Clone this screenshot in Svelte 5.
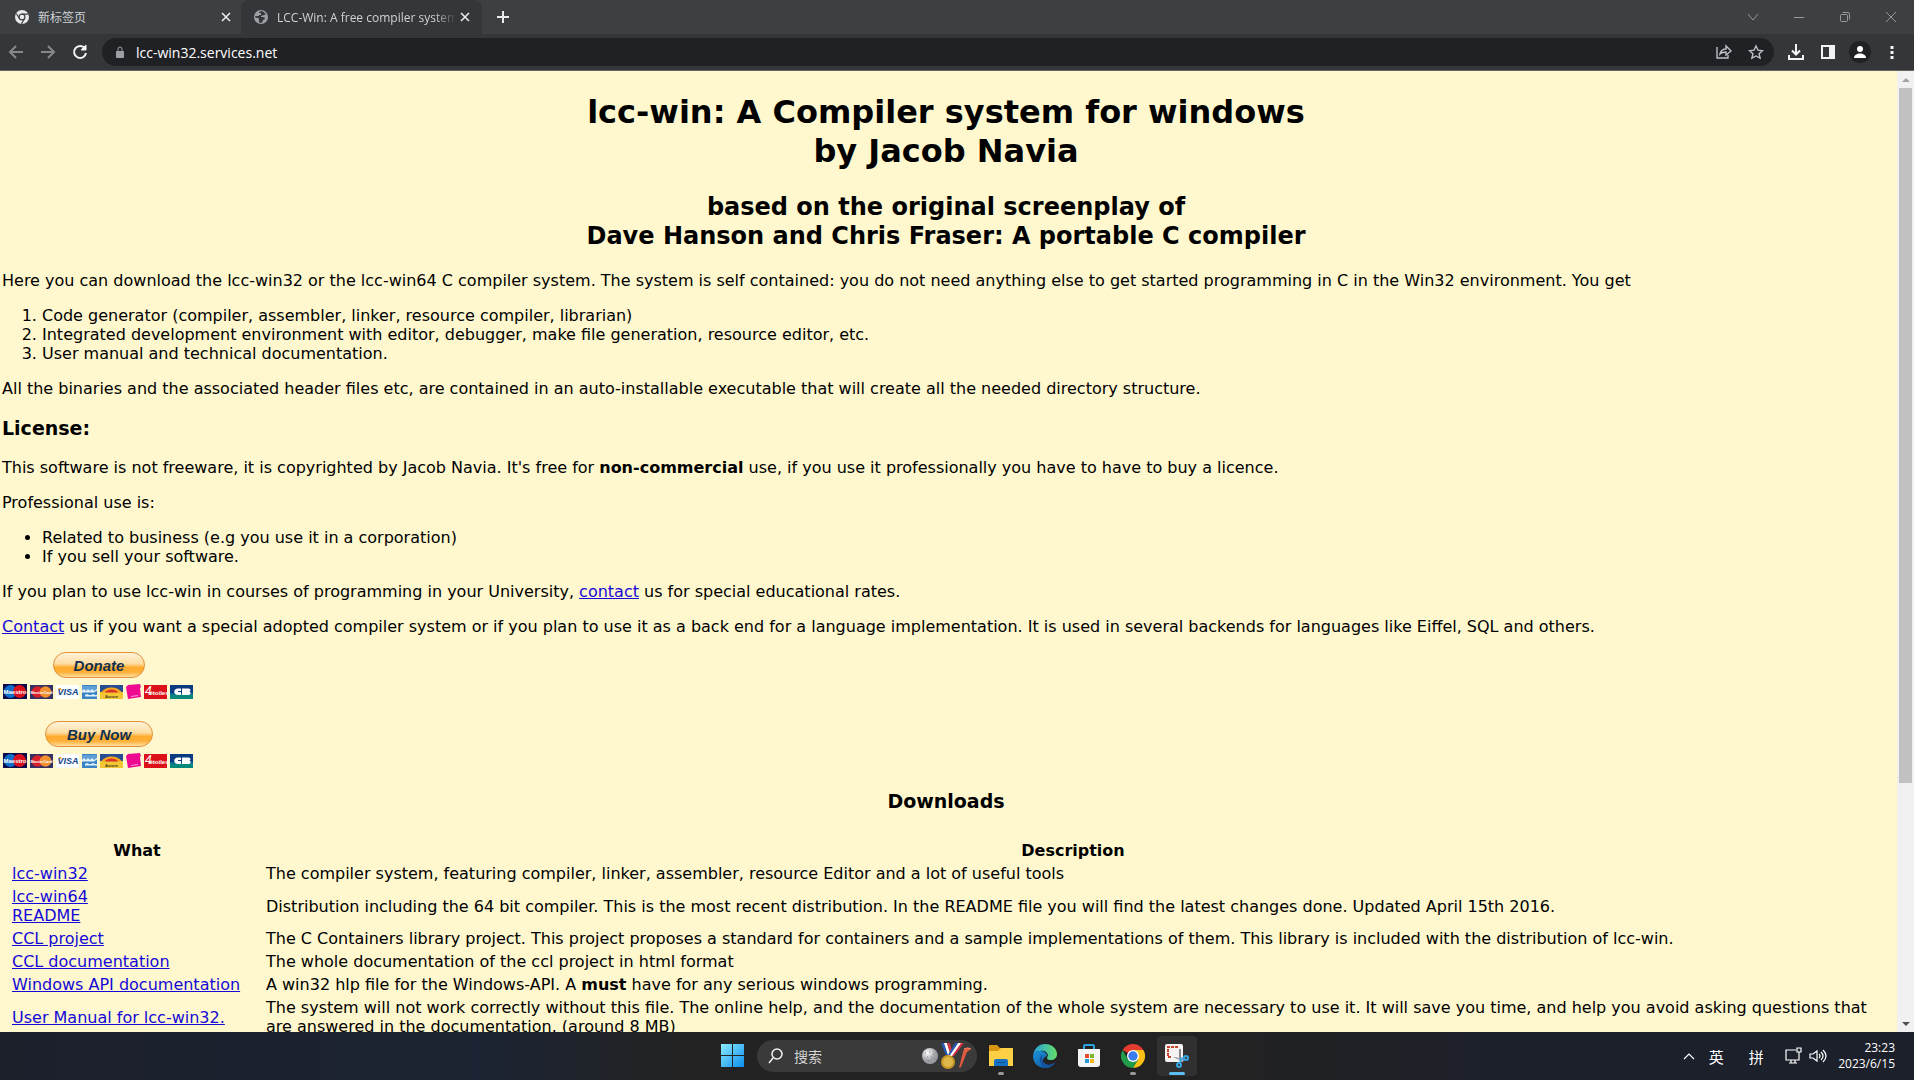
<script lang="ts">
  const downloads = [
    { links: ['lcc-win32'], text: ['The compiler system, featuring compiler, linker, assembler, resource Editor and a lot of useful tools'] },
    { links: ['lcc-win64', 'README'], text: ['Distribution including the 64 bit compiler. This is the most recent distribution. In the README file you will find the latest changes done. Updated April 15th 2016.'] },
    { links: ['CCL project'], text: ['The C Containers library project. This project proposes a standard for containers and a sample implementations of them. This library is included with the distribution of lcc-win.'] },
    { links: ['CCL documentation'], text: ['The whole documentation of the ccl project in html format'] },
    { links: ['Windows API documentation'], text: ['A win32 hlp file for the Windows-API. A ', 'must', ' have for any serious windows programming.'] },
    { links: ['User Manual for lcc-win32.'], text: ['The system will not work correctly without this file. The online help, and the documentation of the whole system are necessary to use it. It will save you time, and help you avoid asking questions that are answered in the documentation. (around 8 MB)'] },
  ];

  let address = $state('lcc-win32.services.net');
</script>

{#snippet cards()}
  <svg class="cards" width="194" height="16" viewBox="0 0 194 16" aria-label="Accepted cards">
    <rect x="1" y="1" width="24" height="15" fill="#0b0b4c" />
    <circle cx="8.500" cy="8.500" r="6.500" fill="#0f6fc8" />
    <circle cx="17.500" cy="8.500" r="6.500" fill="#d9101c" />
    <text x="13" y="10.500" class="card-name" fill="#fff">Maestro</text>
    <rect x="28" y="2" width="23" height="14" fill="#353063" />
    <circle cx="35.500" cy="9" r="5.800" fill="#d8202a" />
    <circle cx="43.500" cy="9" r="5.800" fill="#f2902f" />
    <text x="39.500" y="11" class="card-name small" fill="#fff">MasterCard</text>
    <rect x="54" y="2" width="23" height="14" fill="#fff" />
    <text x="66" y="12" class="visa">VISA</text>
    <path d="M56 5h3l1 3z" fill="#f3a325" />
    <rect x="80" y="2" width="15" height="14" fill="#3a83c4" />
    <path d="M80 3h15v5H80z" fill="#5d9fd6" />
    <path d="M80 8l2-2 2 2 2-2 2 2 2-2 2 2 3-2v1.500l-3 2H80zM83 12l2-1 2 1h2l2-1 2 1h2v1.500H83z" fill="#e3f1fa" />
    <rect x="98" y="2" width="23" height="14" fill="#f3c634" />
    <path d="M98 2h23v7H98z" fill="#284c91" />
    <path d="M99 9.500c3-4 7-5 10.500-5S117 5.500 120 9.500z" fill="#f6a51e" />
    <path d="M103 9.500c2-4 11-4 13 0z" fill="#d8342b" />
    <text x="109.500" y="14.500" class="card-name small" fill="#453c22">Aurore</text>
    <path d="M124 4l2-2 12-1 1 3-1 1 1 9-13 2z" fill="#ee0a91" />
    <path d="M129 13.500l7-1" stroke="#f79bd0" />
    <rect x="142" y="2" width="23" height="14" fill="#dc1019" />
    <text x="143" y="12" class="four">4</text>
    <text x="157" y="12" class="card-name" fill="#fff">étoiles</text>
    <rect x="168" y="2" width="23" height="14" fill="#0a3a82" />
    <path d="M168 11h23v5h-23z" fill="#06897a" />
    <path d="M168 10h23v2h-23z" fill="#0a6a92" />
    <path d="M176 5.500h3v2.500h-3v1h3v3h-3c-5 0-5-6.500 0-6.500zm4 0h6c3 0 3 2.500 1.500 3 2 1 1.500 3.500-1.500 3.500h-6z" fill="#fff" />
  </svg>
{/snippet}

{#snippet chrome(mono: boolean)}
  <svg viewBox="0 0 24 24" width="100%" height="100%" aria-hidden="true">
    {#if mono}
      <circle cx="12" cy="12" r="12" fill="#e8eaed" />
      <circle cx="12" cy="12" r="5" fill="none" stroke="#3c4043" stroke-width="2" />
      <path d="M12 7h11M7.600 14.500L2.300 6M16.400 14.500L11 24" stroke="#3c4043" stroke-width="2" fill="none" />
    {:else}
      <path d="M12 12L1.600 6A12 12 0 0 1 22.400 6z" fill="#e33b2e" />
      <path d="M12 12V6h10.400A12 12 0 0 1 12 24l5.200-9z" fill="#fbc116" />
      <path d="M12 12l5.200 3L12 24A12 12 0 0 1 1.600 6L6.800 15z" fill="#229b4b" />
      <circle cx="12" cy="12" r="6" fill="#fff" />
      <circle cx="12" cy="12" r="4.700" fill="#3b7ded" />
    {/if}
  </svg>
{/snippet}

<div class="screen">
  <header class="browser">
    <div class="tabs">
      <div class="tab">
        <span class="favicon">{@render chrome(true)}</span>
        <span class="tab-title">新标签页</span>
        <button class="tab-close" aria-label="Close tab">
          <svg width="10" height="10" viewBox="0 0 10 10"><path d="M1 1l8 8M9 1L1 9" /></svg>
        </button>
      </div>
      <div class="tab active">
        <span class="favicon">
          <svg width="14" height="14" viewBox="0 0 14 14" aria-hidden="true">
            <circle cx="7" cy="7" r="7" fill="#9aa0a6" />
            <path d="M8 1c-2 0-3 1-3 2h2v2H5v1H3L1 6c0 1 1 2 3 2l1 1v3l1 1c2 0 3-2 3-3l2-1c0-2-2-2-4-2V6l3-1 2-1z" fill="#35363a" />
          </svg>
        </span>
        <span class="tab-title fade">LCC-Win: A free compiler system</span>
        <button class="tab-close" aria-label="Close tab">
          <svg width="10" height="10" viewBox="0 0 10 10"><path d="M1 1l8 8M9 1L1 9" /></svg>
        </button>
      </div>
      <button class="new-tab" aria-label="New tab">
        <svg width="12" height="12" viewBox="0 0 12 12"><path d="M6 0v12M0 6h12" /></svg>
      </button>
      <div class="window-buttons">
        <button aria-label="Search tabs"><svg width="12" height="12" viewBox="0 0 12 12"><path d="M1 3l5 6 5-6" /></svg></button>
        <button aria-label="Minimize"><svg width="12" height="12" viewBox="0 0 12 12"><path d="M1 6.500h10" /></svg></button>
        <button aria-label="Restore"><svg width="12" height="12" viewBox="0 0 12 12"><rect x="1.500" y="3.500" width="7" height="7" rx="1" /><path d="M3.500 1.500H9a1.500 1.500 0 0 1 1.500 1.500v5.500" /></svg></button>
        <button aria-label="Close"><svg width="12" height="12" viewBox="0 0 12 12"><path d="M1 1l10 10M11 1L1 11" /></svg></button>
      </div>
    </div>

    <div class="toolbar">
      <button class="tool dim" aria-label="Back"><svg width="16" height="16" viewBox="0 0 16 16"><path d="M15 8H2M8 2L2 8l6 6" /></svg></button>
      <button class="tool dim" aria-label="Forward"><svg width="16" height="16" viewBox="0 0 16 16"><path d="M1 8h13M8 2l6 6-6 6" /></svg></button>
      <button class="tool" aria-label="Reload"><svg width="16" height="16" viewBox="0 0 16 16"><path d="M13 4.500A6 6 0 1 0 14 9" /><path d="M14 1v5H9z" fill="#fff" stroke-width="1" /></svg></button>
      <div class="omnibox">
        <svg width="10" height="13" viewBox="0 0 10 13" aria-hidden="true">
          <rect x="1" y="5" width="8" height="7" rx="1" fill="#9aa0a6" />
          <path d="M3 5V3a2 2 0 0 1 4 0v2" fill="none" stroke="#9aa0a6" />
        </svg>
        <input type="text" aria-label="Address" bind:value={address} />
        <button class="tool share" aria-label="Share">
          <svg width="16" height="16" viewBox="0 0 16 16"><path d="M1 3v11h11v-3M4 10c1-4 4-5 6-5V2l5 5-5 4V8C7 8 5 9 4 10z" /></svg>
        </button>
        <button class="tool share" aria-label="Bookmark">
          <svg width="16" height="16" viewBox="0 0 16 16"><path d="M8 2l2 4.200 4.500.5-3.400 3 1 4.500L8 12l-4.100 2.200 1-4.500-3.400-3L6 6.200z" /></svg>
        </button>
      </div>
      <button class="tool" aria-label="Downloads"><svg width="16" height="16" viewBox="0 0 16 16"><path d="M8 0v10M4 6.500l4 4 4-4M1 11v4h14v-4" /></svg></button>
      <button class="tool" aria-label="Side panel"><svg width="16" height="16" viewBox="0 0 16 16"><path d="M1 1h14v14H1zm2 2v10h6V3z" fill="#f1f3f4" fill-rule="evenodd" stroke="none" /></svg></button>
      <button class="tool" aria-label="Profile"><svg width="22" height="22" viewBox="0 0 22 22"><circle cx="11" cy="11" r="11" fill="#202124" stroke="none" /><circle cx="11" cy="8" r="3" fill="#fff" stroke="none" /><path d="M5 17c0-6 12-6 12 0z" fill="#fff" stroke="none" /></svg></button>
      <button class="tool" aria-label="Menu"><svg width="4" height="14" viewBox="0 0 4 14"><path d="M.5 1h3v3h-3zm0 5h3v3h-3zm0 5h3v3h-3z" fill="#f1f3f4" stroke="none" /></svg></button>
    </div>
  </header>

  <div class="viewport">
    <main class="page">
      <h1>lcc-win: A Compiler system for windows<br />by Jacob Navia</h1>
      <h2>based on the original screenplay of<br />Dave Hanson and Chris Fraser: A portable C compiler</h2>
      <p>Here you can download the lcc-win32 or the lcc-win64 C compiler system. The system is self contained: you do not need anything else to get started programming in C in the Win32 environment. You get</p>
      <ol>
        <li>Code generator (compiler, assembler, linker, resource compiler, librarian)</li>
        <li>Integrated development environment with editor, debugger, make file generation, resource editor, etc.</li>
        <li>User manual and technical documentation.</li>
      </ol>
      <p>All the binaries and the associated header files etc, are contained in an auto-installable executable that will create all the needed directory structure.</p>
      <h3>License:</h3>
      <p>This software is not freeware, it is copyrighted by Jacob Navia. It's free for <b>non-commercial</b> use, if you use it professionally you have to have to buy a licence.</p>
      <p>Professional use is:</p>
      <ul>
        <li>Related to business (e.g you use it in a corporation)</li>
        <li>If you sell your software.</li>
      </ul>
      <p>If you plan to use lcc-win in courses of programming in your University, <a href="#contact">contact</a> us for special educational rates.</p>
      <p><a href="#contact">Contact</a> us if you want a special adopted compiler system or if you plan to use it as a back end for a language implementation. It is used in several backends for languages like Eiffel, SQL and others.</p>

      <form class="pay">
        <button type="button" class="paypal">Donate</button>
        {@render cards()}
      </form>
      <form class="pay">
        <button type="button" class="paypal buy">Buy Now</button>
        {@render cards()}
      </form>

      <h3 class="centered">Downloads</h3>
      <table>
        <thead>
          <tr><th class="what">What</th><th>Description</th></tr>
        </thead>
        <tbody>
          {#each downloads as row}
            <tr>
              <td>
                {#each row.links as link, i}
                  {#if i > 0}<br />{/if}<a href="#download">{link}</a>
                {/each}
              </td>
              <td>{#each row.text as part, i}{#if i === 1}<b>{part}</b>{:else}{part}{/if}{/each}</td>
            </tr>
          {/each}
        </tbody>
      </table>
    </main>

    <div class="scrollbar" aria-hidden="true">
      <span class="arrow up"></span>
      <span class="track"><span class="thumb"></span></span>
      <span class="arrow down"></span>
    </div>
  </div>

  <footer class="taskbar">
    <div class="dock">
      <button class="app" aria-label="Start">
        <svg width="24" height="24" viewBox="0 0 24 24">
          <defs><linearGradient id="win" x1="0" y1="0" x2="1" y2="1"><stop offset="0" stop-color="#8ceaff" /><stop offset="1" stop-color="#0a8fee" /></linearGradient></defs>
          <path d="M0 0h11v11H0zm12 0h11v11H12zM0 12h11v11H0zm12 0h11v11H12z" fill="url(#win)" />
        </svg>
      </button>
      <label class="search">
        <svg width="16" height="16" viewBox="0 0 16 16" aria-hidden="true"><circle cx="9" cy="6" r="5" /><path d="M5 10l-4 5" /></svg>
        <input type="text" placeholder="搜索" aria-label="搜索" />
        <svg class="medals" width="50" height="28" viewBox="0 0 50 28" aria-hidden="true">
          <defs><radialGradient id="ball" cx="0.35" cy="0.3"><stop offset="0" stop-color="#fff" /><stop offset="1" stop-color="#9b9ca3" /></radialGradient></defs>
          <circle cx="9" cy="14" r="8" fill="url(#ball)" />
          <path d="M4 11h1m3-1h1m3 2h1m-7 3h1m3 0h1m2 2h1m-7 2h1" stroke="#85858d" />
          <path d="M20 1h10l-1 13h-4z" fill="none" />
          <path d="M20 1h3l5 12h-3z" fill="#2859b7" />
          <path d="M23 1h3l4 12h-3z" fill="#fff" />
          <path d="M26 1h3l2 8-2 3z" fill="#d63343" />
          <path d="M43 1h-4l-9 13h3z" fill="#d63343" />
          <path d="M40 1h-3l-9 13h3z" fill="#fff" />
          <path d="M37 1h-3l-7 12h2z" fill="#2859b7" />
          <circle cx="27" cy="20" r="7" fill="#c89926" />
          <circle cx="27" cy="20" r="5" fill="#deb84a" />
          <path d="M43 7q4-3 7 0l-4 3-6 15-2 1 4-16z" fill="#e05a3e" />
          <path d="M43 7q4-2 7 0" stroke="#f38a68" fill="none" />
        </svg>
      </label>
      <button class="app open" aria-label="File Explorer">
        <svg width="26" height="26" viewBox="0 0 26 26">
          <path d="M1 3q0-1 1-1h7l3 3h12q1 0 1 1v6H1z" fill="#d89611" />
          <path d="M1 8h9l3-3h11q1 0 1 1v17H1z" fill="#fdcf45" />
          <path d="M6 23v-5q0-2 2-2h10q2 0 2 2v5z" fill="#1771c3" />
          <path d="M9 19h8v1H9z" fill="#0c4f94" />
        </svg>
      </button>
      <button class="app" aria-label="Edge">
        <svg width="24" height="24" viewBox="0 0 24 24">
          <defs>
            <linearGradient id="edge-top" x1="0" x2="1"><stop offset="0" stop-color="#249ee1" /><stop offset="1" stop-color="#65df66" /></linearGradient>
            <linearGradient id="edge-low" x1="0" x2="1" y2="1"><stop offset="0" stop-color="#1a93d8" /><stop offset="1" stop-color="#104c9b" /></linearGradient>
          </defs>
          <path d="M0 12C1 4 6 0 12 0c8 0 12 6 12 10 0 4-3 6-6 6-4 0-5-2-3-4 0-4-4-6-8-5-4 0-6 2-7 5z" fill="url(#edge-top)" />
          <path d="M0 12C1 8 4 7 7 7c4 0 7 2 7 5-5 1-6 8 0 9 3 1 6-1 8-3-2 4-6 6-10 6C5 24 0 19 0 12z" fill="url(#edge-low)" />
          <path d="M9 11c-4 3-2 10 3 13 5 0 9-3 10-5-5 3-12 2-13-4z" fill="#15539f" />
        </svg>
      </button>
      <button class="app" aria-label="Store">
        <svg width="24" height="26" viewBox="0 0 24 26">
          <path d="M7 7V3q0-1 1-1h8q1 0 1 1v4" fill="none" stroke="#2ba5df" stroke-width="2" />
          <path d="M1 6h22v15q0 3-3 3H4q-3 0-3-3z" fill="#f4f5f6" />
          <path d="M8 11h4v4H8z" fill="#e6502c" /><path d="M13 11h4v4h-4z" fill="#7eb52c" />
          <path d="M8 16h4v4H8z" fill="#259bd8" /><path d="M13 16h4v4h-4z" fill="#f5b51f" />
        </svg>
      </button>
      <button class="app open" aria-label="Chrome"><span class="chrome-logo">{@render chrome(false)}</span></button>
      <button class="app current" aria-label="Snipping Tool">
        <svg width="26" height="26" viewBox="0 0 26 26">
          <rect x="1" y="1" width="18" height="18" rx="2" fill="#f5f2f1" />
          <path d="M14 4H4v10h4" fill="none" stroke="#c4452c" stroke-width="2" stroke-dasharray="3 1" />
          <path d="M15 6h2v11h-2z" fill="#85868b" />
          <path d="M9 14h3l8 3-1 2z" fill="#a4a5aa" />
          <path d="M17 15l-1 5M16 16l4-1" stroke="#38a7e4" stroke-width="2" />
          <circle cx="22" cy="15" r="2" fill="none" stroke="#38a7e4" stroke-width="2" />
          <circle cx="15" cy="22" r="2" fill="none" stroke="#38a7e4" stroke-width="2" />
        </svg>
      </button>
    </div>

    <div class="tray">
      <button aria-label="Show hidden icons"><svg width="12" height="8" viewBox="0 0 12 8"><path d="M1 7l5-5 5 5" /></svg></button>
      <button class="ime">英</button>
      <button class="ime">拼</button>
      <button class="status" aria-label="Network and volume">
        <svg width="18" height="18" viewBox="0 0 18 18"><path d="M11 3H1v10h13V9M4 16h8M6 13v3M10 13v3M12 1h4v4h-4zM14 5v4" /></svg>
        <svg width="18" height="16" viewBox="0 0 18 16"><path d="M1 6v4h3l4 3V3L4 6zM10 6q2 2 0 4M12 4q4 4 0 8M14 2q6 6 0 12" /></svg>
      </button>
      <button class="clock">23:23<br />2023/6/15</button>
    </div>
  </footer>
</div>

<style>
  :global(body) {
    margin: 0;
    overflow: hidden;
  }

  button {
    border: none;
    background: none;
    padding: 0;
    margin: 0;
    color: inherit;
    font: inherit;
  }

  svg {
    display: block;
    flex: none;
  }

  .screen {
    height: 100vh;
    display: flex;
    flex-direction: column;
    font-family: 'Open Sans', 'Noto Sans CJK SC', sans-serif;
  }

  /* Browser frame */
  .browser {
    flex: none;
    background: #35363a;
    border-bottom: 1px solid #66655b;
  }

  .tabs {
    display: flex;
    align-items: center;
    height: 34px;
    background: #3c4043;
  }

  .tab {
    display: flex;
    align-items: center;
    box-sizing: border-box;
    width: 241px;
    height: 34px;
    padding: 0 6px 0 15px;
    color: #d0d2d5;
    font-size: 12px;
  }

  .tab.active {
    padding: 0 8px 0 13px;
    background: #35363a;
    border-radius: 8px 8px 0 0;
  }

  .favicon {
    flex: none;
    width: 14px;
    height: 14px;
    margin-right: 9px;
  }

  .tab-title {
    flex: 1;
    overflow: hidden;
    white-space: nowrap;
  }

  .fade {
    mask-image: linear-gradient(to right, #000 88%, transparent);
  }

  .tab-close {
    width: 18px;
    height: 18px;
    display: grid;
    place-items: center;
  }

  .tab-close svg,
  .new-tab svg {
    stroke: #e8eaed;
    stroke-width: 2;
  }

  .tab-close svg {
    stroke-width: 1.6;
  }

  .new-tab {
    width: 34px;
    height: 34px;
    display: grid;
    place-items: center;
    margin-left: 4px;
  }

  .window-buttons {
    display: flex;
    margin-left: auto;
  }

  .window-buttons button {
    width: 46px;
    height: 28px;
    display: grid;
    place-items: center;
  }

  .window-buttons svg {
    fill: none;
    stroke: #96999b;
  }

  .toolbar {
    display: flex;
    align-items: center;
    height: 36px;
    padding-right: 6px;
  }

  .tool {
    flex: none;
    width: 32px;
    height: 28px;
    display: grid;
    place-items: center;
  }

  .tool svg {
    fill: none;
    stroke: #f1f3f4;
    stroke-width: 2;
  }

  .tool.dim svg {
    stroke: #85878a;
  }

  .tool.share svg {
    stroke: #bdc1c6;
    stroke-width: 1.4;
  }

  .omnibox {
    flex: 1;
    display: flex;
    align-items: center;
    height: 28px;
    margin: 0 6px;
    padding: 0 2px 0 13px;
    border-radius: 14px;
    background: #202124;
  }

  .omnibox input {
    flex: 1;
    min-width: 0;
    margin-left: 11px;
    padding: 0;
    border: none;
    outline: none;
    background: none;
    color: #fff;
    font: 14px 'Open Sans', sans-serif;
  }

  /* Web page */
  .viewport {
    flex: 1;
    min-height: 0;
    display: flex;
    background: #fff8ce;
  }

  .page {
    flex: 1;
    min-width: 0;
    overflow: hidden;
    padding: 0 7px 0 2px;
    color: #000;
    font: 16px/19px Verdana, 'DejaVu Sans', sans-serif;
  }

  h1,
  h2,
  h3 {
    font-weight: bold;
  }

  h1,
  h2,
  .centered {
    text-align: center;
  }

  h1 {
    margin: 22px 0;
    font-size: 32px;
    line-height: 39px;
  }

  h2 {
    margin: 20px 0;
    font-size: 24px;
    line-height: 29px;
  }

  h3 {
    margin: 19px 0 18px;
    font-size: 19px;
    line-height: 23px;
  }

  p,
  ol,
  ul {
    margin: 16px 0;
  }

  ol,
  ul {
    padding-left: 40px;
  }

  a {
    color: #1408d8;
  }

  .pay {
    display: flex;
    flex-direction: column;
    align-items: center;
    width: 194px;
    margin-bottom: 22px;
  }

  .paypal {
    box-sizing: border-box;
    width: 92px;
    height: 26px;
    margin-bottom: 5px;
    border: 1px solid #e0913a;
    border-radius: 13px;
    background: linear-gradient(#fff3dc, #ffdda0 45%, #ffab2e 60%, #ffb03a 80%, #ffe0a0);
    color: #11304f;
    font: italic bold 15px 'Liberation Sans', sans-serif;
  }

  .paypal.buy {
    width: 108px;
  }

  .card-name {
    font: bold 6px 'Liberation Sans', sans-serif;
    text-anchor: middle;
  }

  .card-name.small {
    font-size: 4px;
  }

  .visa {
    font: italic bold 9px 'Liberation Sans', sans-serif;
    fill: #14458c;
    text-anchor: middle;
  }

  .four {
    font: italic 12px 'Liberation Sans', sans-serif;
    fill: #fff;
  }

  table {
    width: calc(100% - 14px);
    margin: 25px 7px 0;
    border-spacing: 2px;
  }

  th,
  td {
    padding: 1px;
  }

  .what {
    width: 250px;
  }

  .scrollbar {
    flex: none;
    width: 17px;
    display: flex;
    flex-direction: column;
    align-items: center;
    background: #f1f1f1;
  }

  .arrow {
    width: 0;
    height: 0;
    margin: 7px 0 6px;
    border: 4px solid transparent;
    border-top-width: 0;
    border-bottom: 4px solid #a3a3a3;
  }

  .arrow.down {
    border-width: 4px 4px 0;
    border-color: #505050 transparent transparent;
  }

  .track {
    flex: 1;
    width: 13px;
  }

  .thumb {
    display: block;
    height: 75%;
    background: #c1c1c1;
  }

  /* Taskbar */
  .taskbar {
    flex: none;
    display: grid;
    grid-template-columns: 1fr auto 1fr;
    align-items: center;
    height: 48px;
    background: linear-gradient(to right, #1c202b, #1b2332 25%, #222 36%, #222 64%, #1c202b 80%);
    color: #fff;
  }

  .dock {
    grid-column: 2;
    display: flex;
    align-items: center;
    gap: 4px;
    padding-right: 4px;
  }

  .app {
    position: relative;
    width: 40px;
    height: 40px;
    display: grid;
    place-items: center;
    border-radius: 4px;
  }

  .app.current {
    background: #303030;
  }

  .app.open::after,
  .app.current::after {
    content: '';
    position: absolute;
    bottom: 1px;
    left: 17px;
    width: 6px;
    height: 3px;
    border-radius: 2px;
    background: #999;
  }

  .app.current::after {
    left: 12px;
    width: 16px;
    background: #5cbdf0;
  }

  .chrome-logo {
    width: 24px;
    height: 24px;
  }

  .search {
    display: flex;
    align-items: center;
    box-sizing: border-box;
    width: 220px;
    height: 32px;
    padding: 0 6px 0 11px;
    border-radius: 16px;
    background: #3a3a3a;
  }

  .search > svg:first-child {
    fill: none;
    stroke: #f4f4f4;
    stroke-width: 1.5;
  }

  .search input {
    flex: 1;
    min-width: 0;
    margin-left: 10px;
    padding: 0;
    border: none;
    outline: none;
    background: none;
    font: 14px 'Noto Sans CJK SC', sans-serif;
  }

  .search input::placeholder {
    color: #d4d4d4;
  }

  .tray {
    grid-column: 3;
    justify-self: end;
    display: flex;
    align-items: center;
    padding-right: 19px;
  }

  .tray svg {
    fill: none;
    stroke: #fff;
    stroke-width: 1.2;
  }

  .ime {
    width: 38px;
    margin-left: 2px;
    font: 15px 'Noto Sans CJK SC', sans-serif;
  }

  .status {
    display: flex;
    align-items: center;
    gap: 6px;
    margin: 0 11px 0 10px;
  }

  .clock {
    font-size: 12px;
    line-height: 16px;
    text-align: right;
  }
</style>
